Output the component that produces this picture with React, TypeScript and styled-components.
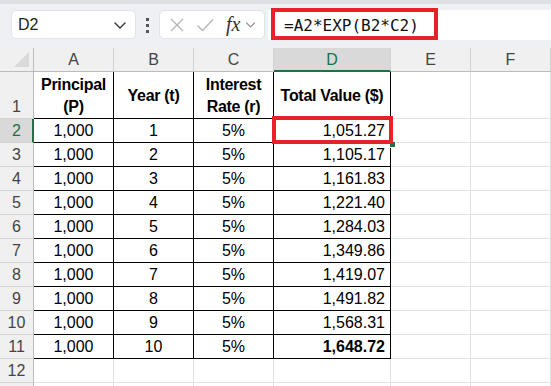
import React from 'react';
import styled, { createGlobalStyle, css } from 'styled-components';

const GlobalStyle = createGlobalStyle`
  html, body {
    margin: 0;
    padding: 0;
    background: #ffffff;
    overflow: hidden;
  }
  body {
    font-family: 'Liberation Sans', Arial, sans-serif;
  }
`;

const COLS = ['A', 'B', 'C', 'D', 'E', 'F'];
const SELECTED_COL = 'D';
const SELECTED_ROW = 2;

const values = [
  '1,051.27',
  '1,105.17',
  '1,161.83',
  '1,221.40',
  '1,284.03',
  '1,349.86',
  '1,419.07',
  '1,491.82',
  '1,568.31',
  '1,648.72',
];

const Page = styled.div`
  width: 551px;
  height: 386px;
  display: flex;
  flex-direction: column;
  background: #eff0f3;
  overflow: hidden;
`;

const TopStrip = styled.div`
  flex-shrink: 0;
  height: 4px;
  background: #dfe0e4;
`;

const Toolbar = styled.div`
  flex-shrink: 0;
  height: 44px;
  display: flex;
  align-items: flex-start;
  padding-top: 6px;
  box-sizing: border-box;
`;

const NameBox = styled.div`
  margin-left: 11px;
  width: 125px;
  height: 29px;
  box-sizing: border-box;
  background: #fff;
  border: 1px solid #e2e3e7;
  border-radius: 5px;
  display: flex;
  align-items: center;
  justify-content: space-between;
  padding: 0 7px 0 6px;
  font-size: 16px;
  color: #222;
`;

const Dots = styled.div`
  margin: 8px 10px 0 10px;
  display: flex;
  flex-direction: column;
  gap: 3px;

  span {
    width: 3px;
    height: 3px;
    background: #555;
  }
`;

const IconBox = styled.div`
  width: 106px;
  height: 29px;
  box-sizing: border-box;
  background: #fff;
  border: 1px solid #e2e3e7;
  border-radius: 5px;
  display: flex;
  align-items: center;
  padding: 0 6px 0 9px;
  gap: 11px;
`;

const Fx = styled.span`
  font-family: 'Liberation Serif', 'Times New Roman', serif;
  font-style: italic;
  font-size: 20px;
  color: #333;
  margin-left: 1px;
  margin-right: -7px;
`;

const FormulaBar = styled.div`
  position: relative;
  flex: 1;
  margin-left: 3px;
  height: 30px;
  background: #fff;
  display: flex;
  align-items: center;
  padding-left: 16px;
  font-family: 'DejaVu Sans Mono', 'Liberation Mono', monospace;
  font-size: 16px;
  color: #111;
`;

const Highlight = styled.div<{ $thick: number }>`
  position: absolute;
  border: ${(p) => p.$thick}px solid #e8202a;
  box-sizing: border-box;
  pointer-events: none;
`;

const Sheet = styled.div`
  position: relative;
  flex: 1;
  min-height: 0;
  display: grid;
  grid-template-columns: 34px 80px 80px 80px 117px 80px 80px 1fr;
  grid-template-rows: 24px 47px repeat(12, 24px);
  background: #fff;
`;

const Corner = styled.div`
  position: relative;
  background: #f0f0f0;
  border-right: 1px solid #bcbcbc;
  border-bottom: 1px solid #bcbcbc;

  &::after {
    content: '';
    position: absolute;
    right: 4px;
    bottom: 4px;
    width: 0;
    height: 0;
    border-left: 15px solid transparent;
    border-bottom: 15px solid #dadada;
  }
`;

const ColHead = styled.div<{ $active?: boolean }>`
  background: ${(p) => (p.$active ? '#d9d9d9' : '#f0f0f0')};
  border-right: 1px solid #d2d2d2;
  border-bottom: ${(p) => (p.$active ? '2px solid #1e7145' : '1px solid #bcbcbc')};
  display: flex;
  align-items: center;
  justify-content: center;
  font-size: 16px;
  color: ${(p) => (p.$active ? '#1e7145' : '#444')};
  padding-top: ${(p) => (p.$active ? '1px' : '0')};
`;

const RowHead = styled.div<{ $active?: boolean; $bottom?: boolean }>`
  background: ${(p) => (p.$active ? '#d9d9d9' : '#f0f0f0')};
  border-right: ${(p) => (p.$active ? '2px solid #1e7145' : '1px solid #bcbcbc')};
  border-bottom: 1px solid #d2d2d2;
  display: flex;
  align-items: ${(p) => (p.$bottom ? 'flex-end' : 'center')};
  justify-content: center;
  padding-bottom: ${(p) => (p.$bottom ? '2px' : '0')};
  padding-left: ${(p) => (p.$active ? '1px' : '0')};
  font-size: 16px;
  color: ${(p) => (p.$active ? '#1e7145' : '#444')};
`;

const Cell = styled.div<{
  $boxed?: boolean;
  $align?: 'center' | 'right';
  $bold?: boolean;
}>`
  border-right: 1px solid #e1e1e1;
  border-bottom: 1px solid #e1e1e1;
  display: flex;
  align-items: center;
  justify-content: ${(p) => (p.$align === 'right' ? 'flex-end' : 'center')};
  padding-right: ${(p) => (p.$align === 'right' ? '5px' : '0')};
  font-size: 16px;
  color: #000;
  font-weight: ${(p) => (p.$bold ? 'bold' : 'normal')};
  ${(p) =>
    p.$boxed &&
    css`
      border-right-color: #000;
      border-bottom-color: #000;
    `}
`;

const HeadCell = styled(Cell)`
  flex-direction: column;
  text-align: center;
  font-weight: bold;
  line-height: 22px;
  letter-spacing: -0.3px;
  padding-top: 1px;
`;

const FillHandle = styled.div`
  position: absolute;
  left: 389px;
  top: 93px;
  width: 5px;
  height: 5px;
  background: #1e7145;
  border: 1px solid #fff;
`;

const Chevron: React.FC<{ size: number; color: string }> = ({ size, color }) => (
  <svg width={size} height={size} viewBox="0 0 16 16" fill="none">
    <path d="M3 6l5 5 5-5" stroke={color} strokeWidth="1.4" strokeLinecap="round" strokeLinejoin="round" />
  </svg>
);

export default function App() {
  const rows = Array.from({ length: 10 }, (_, i) => i + 2);

  return (
    <>
      <GlobalStyle />
      <Page>
        <TopStrip />
        <Toolbar>
          <NameBox>
            <span>D2</span>
            <Chevron size={16} color="#333" />
          </NameBox>
          <Dots>
            <span />
            <span />
            <span />
          </Dots>
          <IconBox>
            <svg width="16" height="16" viewBox="0 0 16 16">
              <path d="M2 2l12 12M14 2L2 14" stroke="#b4b4b4" strokeWidth="1.3" />
            </svg>
            <svg width="18" height="16" viewBox="0 0 18 16">
              <path d="M1.5 8.5l5 5L17 2.5" stroke="#b4b4b4" strokeWidth="1.3" fill="none" />
            </svg>
            <Fx>fx</Fx>
            <Chevron size={13} color="#888" />
          </IconBox>
          <FormulaBar>
            =A2*EXP(B2*C2)
            <Highlight $thick={4} style={{ left: 3, top: -2, width: 167, height: 32 }} />
          </FormulaBar>
        </Toolbar>
        <Sheet>
          <Corner />
          {COLS.map((c) => (
            <ColHead key={c} $active={c === SELECTED_COL}>
              {c}
            </ColHead>
          ))}
          <ColHead />

          <RowHead $bottom>1</RowHead>
          <HeadCell $boxed>
            <span>Principal</span>
            <span>(P)</span>
          </HeadCell>
          <HeadCell $boxed>Year (t)</HeadCell>
          <HeadCell $boxed>
            <span>Interest</span>
            <span>Rate (r)</span>
          </HeadCell>
          <HeadCell $boxed>Total Value ($)</HeadCell>
          <Cell />
          <Cell />
          <Cell />

          {rows.map((r, i) => (
            <React.Fragment key={r}>
              <RowHead $active={r === SELECTED_ROW}>{r}</RowHead>
              <Cell $boxed>1,000</Cell>
              <Cell $boxed>{i + 1}</Cell>
              <Cell $boxed>5%</Cell>
              <Cell $boxed $align="right" $bold={r === 11}>
                {values[i]}
              </Cell>
              <Cell />
              <Cell />
              <Cell />
            </React.Fragment>
          ))}

          <RowHead>12</RowHead>
          {COLS.map((c) => (
            <Cell key={c} />
          ))}
          <Cell />
          <RowHead />
          {COLS.map((c) => (
            <Cell key={c} />
          ))}
          <Cell />

          <FillHandle />
          <Highlight $thick={4} style={{ left: 272, top: 68, width: 121, height: 28 }} />
        </Sheet>
      </Page>
    </>
  );
}
